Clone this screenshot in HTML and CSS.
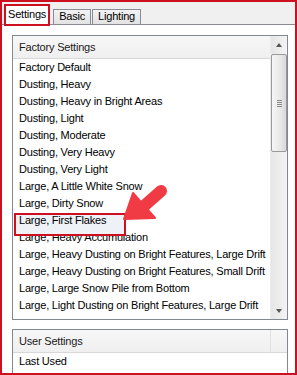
FILE: index.html
```html
<!DOCTYPE html>
<html>
<head>
<meta charset="utf-8">
<link rel="stylesheet" href="styles.css">
</head>
<body>
<div class="frame">
  <div class="tabstrip">
    <div class="tab active">Settings</div>
    <div class="tab">Basic</div>
    <div class="tab">Lighting</div>
  </div>
  <div class="panel">
    <div class="listbox factory">
      <div class="lb-main">
        <div class="lb-header">Factory Settings</div>
        <ul class="lb-items">
          <li>Factory Default</li>
          <li>Dusting, Heavy</li>
          <li>Dusting, Heavy in Bright Areas</li>
          <li>Dusting, Light</li>
          <li>Dusting, Moderate</li>
          <li>Dusting, Very Heavy</li>
          <li>Dusting, Very Light</li>
          <li>Large, A Little White Snow</li>
          <li>Large, Dirty Snow</li>
          <li class="selected">Large, First Flakes</li>
          <li>Large, Heavy Accumulation</li>
          <li>Large, Heavy Dusting on Bright Features, Large Drift</li>
          <li>Large, Heavy Dusting on Bright Features, Small Drift</li>
          <li>Large, Large Snow Pile from Bottom</li>
          <li>Large, Light Dusting on Bright Features, Large Drift</li>
        </ul>
      </div>
      <div class="scrollbar">
        <div class="sb-btn"><span class="tri up"></span></div>
        <div class="sb-track">
          <div class="sb-thumb"><span class="grip"></span></div>
        </div>
        <div class="sb-btn"><span class="tri down"></span></div>
      </div>
    </div>
    <div class="listbox user">
      <div class="lb-main">
        <div class="lb-header">User Settings</div>
        <ul class="lb-items">
          <li>Last Used</li>
        </ul>
      </div>
      <div class="hdr-filler"></div>
    </div>
  </div>
</div>
<svg class="callout" width="297" height="375" viewBox="0 0 297 375">
  <line x1="144" y1="206" x2="161" y2="191" stroke="#f03a44" stroke-width="12" stroke-linecap="round"/>
  <polygon points="124,219 133,193 155,218" fill="#f03a44" stroke="#f03a44" stroke-width="2" stroke-linejoin="round"/>
</svg>
</body>
</html>
```
FILE: styles.css
```css
* { box-sizing: border-box; }
html, body { margin: 0; padding: 0; }
body {
  position: relative;
  width: 297px;
  height: 375px;
  background: #fff;
  font-family: "Liberation Sans", Arial, sans-serif;
  font-size: 11px;
  letter-spacing: -0.2px;
  color: #000;
}
.frame {
  width: 297px;
  height: 375px;
  border: 2px solid #cc1020;
  overflow: hidden;
  background: #fff;
}
.tabstrip {
  display: flex;
  align-items: flex-end;
  height: 23px;
  padding-left: 2px;
  background: #f0f0f0;
  border-bottom: 1px solid #898c95;
}
.tab {
  height: 15px;
  line-height: 13px;
  padding: 0 5px;
  margin-left: 1px;
  border: 1px solid #898c95;
  border-bottom: none;
  background: linear-gradient(#f2f2f2, #e3e3e3);
  color: #000;
}
.tab.active {
  position: relative;
  z-index: 1;
  height: 22px;
  line-height: 17px;
  margin-left: 0;
  margin-bottom: -2px;
  padding: 0 2px;
  border: 2px solid #cc1020;
  background: #fff;
}
.tab.active + .tab { margin-left: 3px; }
.panel {
  padding: 10px 7px 0 10px;
}
.listbox {
  display: flex;
  border: 1px solid #828790;
  background: #fff;
}
.listbox.factory { height: 285px; }
.listbox.user { height: 60px; margin-top: 9px; }
.lb-main {
  flex: 1;
  min-width: 0;
  overflow: hidden;
}
.lb-header {
  height: 23px;
  line-height: 22px;
  padding-left: 6px;
  background: linear-gradient(#f7f7f7, #efefef);
  border-bottom: 1px solid #d8d8d8;
  color: #1a1a1a;
}
.lb-items {
  list-style: none;
  margin: 0;
  padding: 0;
}
.lb-items li {
  height: 17px;
  line-height: 17px;
  padding-left: 6px;
  white-space: nowrap;
}
.lb-items li.selected {
  position: relative;
  z-index: 0;
}
.lb-items li.selected::before {
  content: "";
  position: absolute;
  z-index: -1;
  left: 1px;
  top: 1px;
  width: 108px;
  height: 19px;
  border: 2px solid #cc1020;
  background: #eef1f6;
}
.scrollbar {
  width: 17px;
  display: flex;
  flex-direction: column;
  background: linear-gradient(to right, #e6e6e6, #f3f3f3);
  border-left: 1px solid #ececec;
}
.sb-btn {
  height: 17px;
  display: flex;
  align-items: center;
  justify-content: center;
}
.tri {
  width: 0;
  height: 0;
  border-left: 3.5px solid transparent;
  border-right: 3.5px solid transparent;
}
.tri.up { border-bottom: 4px solid #555; }
.tri.down { border-top: 4px solid #555; }
.sb-track {
  flex: 1;
  padding-top: 1px;
}
.sb-thumb {
  height: 98px;
  border: 1px solid #999;
  border-radius: 2px;
  background: linear-gradient(to right, #f6f6f6, #e8e8e8 60%, #d8d8d8);
  display: flex;
  align-items: center;
  justify-content: center;
}
.grip {
  width: 5px;
  height: 7px;
  background: repeating-linear-gradient(#8a8a8a 0 1px, transparent 1px 2px);
}
.hdr-filler {
  width: 17px;
  height: 23px;
  border-left: 1px solid #e2e2e2;
  border-bottom: 1px solid #d8d8d8;
  background: linear-gradient(#f7f7f7, #efefef);
}
.callout {
  position: absolute;
  left: 0;
  top: 0;
  pointer-events: none;
}
```
